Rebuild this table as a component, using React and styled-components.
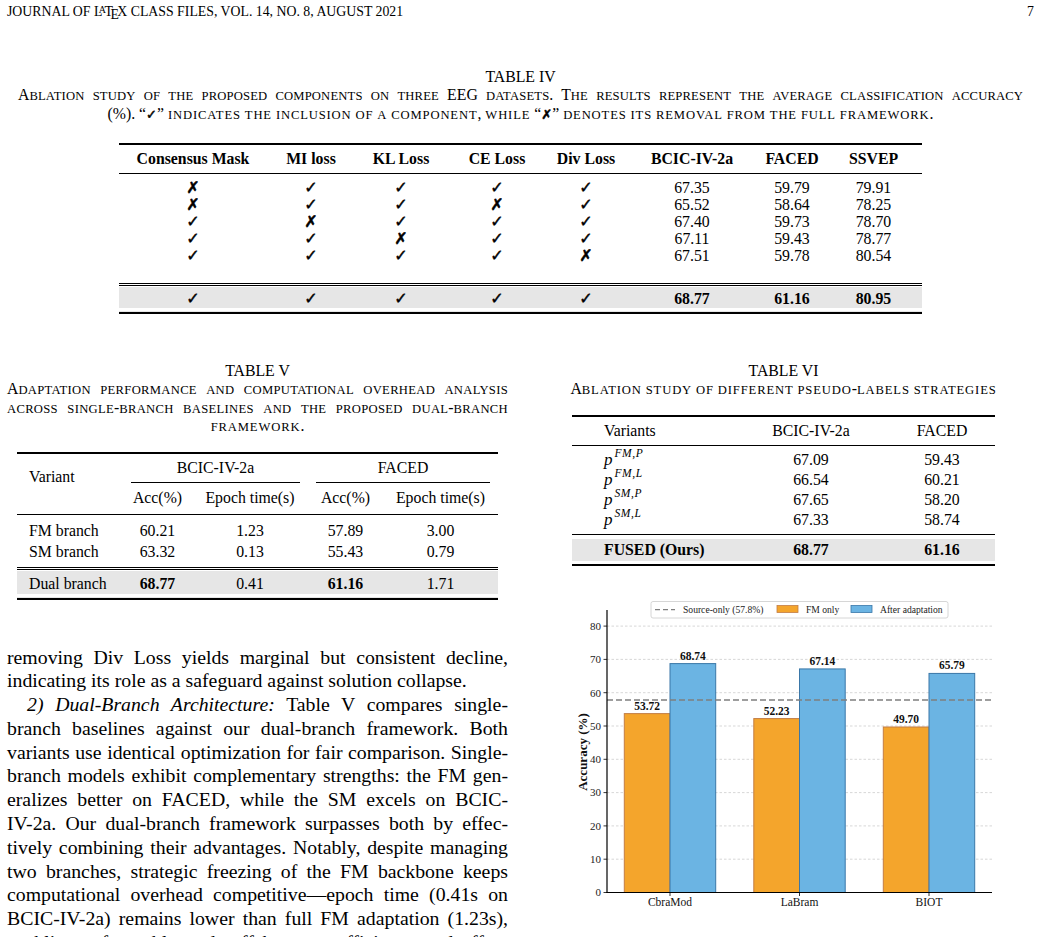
import React from "react";
import styled, { createGlobalStyle, css } from "styled-components";

const GlobalStyle = createGlobalStyle`
  html, body { margin: 0; padding: 0; background: #ffffff; }
  body {
    font-family: "Liberation Serif", "Times New Roman", serif;
    color: #000;
  }
`;

const Page = styled.main`
  box-sizing: border-box;
  width: 1041px;
  height: 937px;
  overflow: hidden;
  padding: 4px 7px 0;
`;

const RunningHead = styled.header`
  display: flex;
  justify-content: space-between;
  font-size: 13.8px;
  line-height: 16px;
`;

const LatexA = styled.span`
  font-size: 0.72em;
  vertical-align: 0.28em;
  margin-left: -0.36em;
  margin-right: -0.15em;
  line-height: 0;
`;

const LatexE = styled.span`
  vertical-align: -0.5ex;
  margin-left: -0.1667em;
  margin-right: -0.125em;
  line-height: 0;
`;

const LatexLogo = () => (
  <span>
    L<LatexA>A</LatexA>T<LatexE>E</LatexE>X
  </span>
);

/* ---------- captions ---------- */

const CaptionBlock = styled.div`
  width: ${(p) => p.$width}px;
  margin: 0 auto;
  font-size: 15.8px;
  line-height: 18.5px;
  text-align: center;
`;

const CaptionLine = styled.div`
  --sc-track: ${(p) => (p.$track != null ? p.$track : 0.85)}px;
  ${(p) =>
    p.$justify &&
    css`
      text-align: justify;
      text-align-last: justify;
    `}
  ${(p) =>
    p.$inset &&
    css`
      padding: 0 ${p.$inset}px;
    `}
`;

const Sc = styled.span`
  font-size: 0.8em;
  line-height: 1;
  letter-spacing: var(--sc-track);
  text-transform: uppercase;
`;

const SmallCaps = ({ text }) =>
  text.split(/([a-z]+)/).map((part, i) =>
    /^[a-z]+$/.test(part) ? <Sc key={i}>{part}</Sc> : <React.Fragment key={i}>{part}</React.Fragment>
  );

const Mark = styled.span`
  font-family: "DejaVu Sans", sans-serif;
  font-size: ${(p) => p.$size || 16}px;
  font-weight: 400;
  -webkit-text-stroke: 0.5px #000;
  display: inline-block;
  line-height: ${(p) => (p.$size ? 1 : "17px")};
  vertical-align: ${(p) => (p.$size ? "baseline" : "top")};
`;

/* ---------- tables ---------- */

const DataTable = styled.table`
  border-collapse: collapse;
  table-layout: fixed;
  width: ${(p) => p.$width}px;
  margin: ${(p) => p.$gap}px auto 0;
  font-family: "Liberation Serif", "Times New Roman", serif;
  font-size: 15.8px;
  line-height: ${(p) => p.$lh || 16}px;
`;

const Col = styled.col`
  width: ${(p) => p.$w}px;
`;

const Row = styled.tr`
  ${(p) => p.$top === "thick" && css`border-top: 2px solid #000;`}
  ${(p) => p.$top === "thin" && css`border-top: 1px solid #000;`}
  ${(p) => p.$top === "double" && css`border-top: 3px double #000;`}
  ${(p) => p.$bottom === "thick" && css`border-bottom: 2px solid #000;`}
  ${(p) => p.$bottom === "thin" && css`border-bottom: 1px solid #000;`}
  ${(p) =>
    p.$shade &&
    css`
      background: linear-gradient(
        to bottom,
        transparent ${p.$shade[0]}px,
        #e6e6e6 ${p.$shade[0]}px,
        #e6e6e6 calc(100% - ${p.$shade[1]}px),
        transparent calc(100% - ${p.$shade[1]}px)
      );
    `}
  & > td,
  & > th {
    padding-top: ${(p) => p.$pt || 0}px;
    padding-bottom: ${(p) => p.$pb || 0}px;
  }
`;

const Cell = styled.td`
  text-align: ${(p) => p.$align || "center"};
  padding-left: ${(p) => p.$indent || 0}px;
  padding-right: 0;
  font-weight: ${(p) => (p.$bold ? 700 : 400)};
  vertical-align: middle;
  white-space: nowrap;
`;

const SpanHead = styled.th`
  padding: 0 !important;
  font-weight: 400;
`;

const GroupRule = styled.div`
  margin: 0 8px;
  height: 28px;
  line-height: 28px;
  border-bottom: 1px solid #000;
`;

const RowSpanHead = styled.th`
  text-align: left;
  font-weight: 400;
  padding: 0 0 13px 12px !important;
  vertical-align: middle;
`;

const MathVar = styled.span`
  font-style: italic;
  font-size: 17px;
`;

const MathSup = styled.span`
  font-style: italic;
  font-size: 11.5px;
  vertical-align: 8px;
  line-height: 0;
  margin-left: 2px;
  letter-spacing: 0.6px;
`;

/* ---------- layout ---------- */

const WideFloat = styled.section`
  margin-top: 47.5px;
`;

const Columns = styled.div`
  display: grid;
  grid-template-columns: 501px 501px;
  column-gap: 25px;
  align-items: start;
  margin-top: 48px;
`;

const Column = styled.div`
  display: flex;
  flex-direction: column;
`;

const BodyText = styled.div`
  margin-top: 46px;
  font-size: 19.8px;
  line-height: 23.8px;
`;

const TextLine = styled.div`
  text-align: ${(p) => (p.$end ? "left" : "justify")};
  text-align-last: ${(p) => (p.$end ? "left" : "justify")};
  text-indent: ${(p) => (p.$indent ? "20px" : "0")};
`;

const ChartSvg = styled.svg`
  display: block;
  margin-top: 31px;
  font-family: "Liberation Serif", "Times New Roman", serif;
`;

const Italic = styled.span`
  font-style: italic;
`;

/* ---------- data ---------- */

const Y = "✓";
const N = "✗";

const ablationRows = [
  [N, Y, Y, Y, Y, "67.35", "59.79", "79.91"],
  [N, Y, Y, N, Y, "65.52", "58.64", "78.25"],
  [Y, N, Y, Y, Y, "67.40", "59.73", "78.70"],
  [Y, Y, N, Y, Y, "67.11", "59.43", "78.77"],
  [Y, Y, Y, Y, N, "67.51", "59.78", "80.54"],
];

const ablationCols = [148, 88, 92, 100, 78, 134, 66, 97];
const ablationHeads = ["Consensus Mask", "MI loss", "KL Loss", "CE Loss", "Div Loss", "BCIC-IV-2a", "FACED", "SSVEP"];

const pseudoRows = [
  ["FM,P", "67.09", "59.43"],
  ["FM,L", "66.54", "60.21"],
  ["SM,P", "67.65", "58.20"],
  ["SM,L", "67.33", "58.74"],
];

const models = [
  { name: "CbraMod", fm: 53.72, after: 68.74, cx: 137 },
  { name: "LaBram", fm: 52.23, after: 67.14, cx: 266.5 },
  { name: "BIOT", fm: 49.7, after: 65.79, cx: 396 },
];

const yOf = (v) => 295.5 - 3.33 * v;
const BAR_W = 45.7;

/* ---------- pieces ---------- */

function AblationTable() {
  return (
    <DataTable $width={803} $gap={19.5} $lh={17}>
      <colgroup>
        {ablationCols.map((w, i) => (
          <Col key={i} $w={w} />
        ))}
      </colgroup>
      <thead>
        <Row $top="thick" $bottom="thin" $pt={5.5} $pb={5.5}>
          {ablationHeads.map((h) => (
            <Cell as="th" key={h} $bold>
              {h}
            </Cell>
          ))}
        </Row>
      </thead>
      <tbody>
        {ablationRows.map((r, i) => (
          <Row key={i} $pt={i === 0 ? 5 : 0} $pb={i === ablationRows.length - 1 ? 19 : 0}>
            {r.map((c, j) => (
              <Cell key={j}>{j < 5 ? <Mark>{c}</Mark> : c}</Cell>
            ))}
          </Row>
        ))}
        <Row $top="double" $bottom="thick" $shade={[0, 2.5]} $pt={4} $pb={5}>
          {[Y, Y, Y, Y, Y].map((c, j) => (
            <Cell key={j}>
              <Mark>{c}</Mark>
            </Cell>
          ))}
          <Cell $bold>68.77</Cell>
          <Cell $bold>61.16</Cell>
          <Cell $bold>80.95</Cell>
        </Row>
      </tbody>
    </DataTable>
  );
}

function OverheadTable() {
  return (
    <DataTable $width={481} $gap={16}>
      <colgroup>
        <Col $w={106} />
        <Col $w={69} />
        <Col $w={116} />
        <Col $w={75} />
        <Col $w={115} />
      </colgroup>
      <thead>
        <Row $top="thick">
          <RowSpanHead rowSpan={2}>Variant</RowSpanHead>
          <SpanHead colSpan={2}>
            <GroupRule>BCIC-IV-2a</GroupRule>
          </SpanHead>
          <SpanHead colSpan={2}>
            <GroupRule>FACED</GroupRule>
          </SpanHead>
        </Row>
        <Row $bottom="thin" $pt={7.5} $pb={7.5}>
          <Cell as="th">Acc(%)</Cell>
          <Cell as="th">Epoch time(s)</Cell>
          <Cell as="th">Acc(%)</Cell>
          <Cell as="th">Epoch time(s)</Cell>
        </Row>
      </thead>
      <tbody>
        <Row $pt={8.5} $pb={2.5}>
          <Cell $align="left" $indent={12}>FM branch</Cell>
          <Cell>60.21</Cell>
          <Cell>1.23</Cell>
          <Cell>57.89</Cell>
          <Cell>3.00</Cell>
        </Row>
        <Row $pt={2.5} $pb={6.5}>
          <Cell $align="left" $indent={12}>SM branch</Cell>
          <Cell>63.32</Cell>
          <Cell>0.13</Cell>
          <Cell>55.43</Cell>
          <Cell>0.79</Cell>
        </Row>
        <Row $top="double" $bottom="thick" $shade={[0, 2.5]} $pt={6} $pb={6}>
          <Cell $align="left" $indent={12}>Dual branch</Cell>
          <Cell $bold>68.77</Cell>
          <Cell>0.41</Cell>
          <Cell $bold>61.16</Cell>
          <Cell>1.71</Cell>
        </Row>
      </tbody>
    </DataTable>
  );
}

function PseudoLabelTable() {
  return (
    <DataTable $width={423} $gap={16}>
      <colgroup>
        <Col $w={161} />
        <Col $w={156} />
        <Col $w={106} />
      </colgroup>
      <thead>
        <Row $top="thick" $bottom="thin" $pt={6} $pb={6}>
          <Cell as="th" $align="left" $indent={32}>Variants</Cell>
          <Cell as="th">BCIC-IV-2a</Cell>
          <Cell as="th">FACED</Cell>
        </Row>
      </thead>
      <tbody>
        {pseudoRows.map(([sup, a, b], i) => (
          <Row key={sup} $pt={i === 0 ? 6 : 2} $pb={i === pseudoRows.length - 1 ? 6 : 2}>
            <Cell $align="left" $indent={32}>
              <MathVar>p</MathVar>
              <MathSup>{sup}</MathSup>
            </Cell>
            <Cell>{a}</Cell>
            <Cell>{b}</Cell>
          </Row>
        ))}
        <Row $top="thin" $bottom="thick" $shade={[4, 2]} $pt={7.5} $pb={5.5}>
          <Cell $align="left" $indent={32} $bold>FUSED (Ours)</Cell>
          <Cell $bold>68.77</Cell>
          <Cell $bold>61.16</Cell>
        </Row>
      </tbody>
    </DataTable>
  );
}

function AccuracyChart() {
  const ticks = [0, 10, 20, 30, 40, 50, 60, 70, 80];
  return (
    <ChartSvg width="501" height="318" viewBox="0 0 501 318">
      {ticks
        .filter((t) => t > 0)
        .map((t) => (
          <line key={"g" + t} x1="74" x2="459" y1={yOf(t)} y2={yOf(t)} stroke="#cdcdcd" strokeWidth="0.8" strokeDasharray="2.5 2" />
        ))}
      {models.map((m) => (
        <g key={m.name}>
          <rect x={m.cx - BAR_W} y={yOf(m.fm)} width={BAR_W} height={295.5 - yOf(m.fm)} fill="#f4a52c" stroke="#c27d45" strokeWidth="1" />
          <rect x={m.cx} y={yOf(m.after)} width={BAR_W} height={295.5 - yOf(m.after)} fill="#6bb4e3" stroke="#3a77a8" strokeWidth="1" />
          <text x={m.cx - BAR_W / 2} y={yOf(m.fm) - 4} fontSize="11.5" fontWeight="700" textAnchor="middle" fill="#111">
            {m.fm.toFixed(2)}
          </text>
          <text x={m.cx + BAR_W / 2} y={yOf(m.after) - 4} fontSize="11.5" fontWeight="700" textAnchor="middle" fill="#111">
            {m.after.toFixed(2)}
          </text>
          <line x1={m.cx} x2={m.cx} y1="295.5" y2="299" stroke="#000" strokeWidth="0.8" />
          <text x={m.cx} y="309" fontSize="11.5" textAnchor="middle" fill="#111">
            {m.name}
          </text>
        </g>
      ))}
      <line x1="74" x2="459" y1={yOf(57.8)} y2={yOf(57.8)} stroke="#7f7f7f" strokeWidth="1.4" strokeDasharray="6 3" />
      {ticks.map((t) => (
        <g key={"t" + t}>
          <line x1="70.5" x2="74" y1={yOf(t)} y2={yOf(t)} stroke="#000" strokeWidth="0.8" />
          <text x="68" y={yOf(t) + 3.8} fontSize="11" textAnchor="end" fill="#222">
            {t}
          </text>
        </g>
      ))}
      <line x1="74" x2="74" y1="13" y2="296" stroke="#000" strokeWidth="1.2" />
      <line x1="73.4" x2="459" y1="295.5" y2="295.5" stroke="#000" strokeWidth="1.2" />
      <text transform="translate(53.5 155) rotate(-90)" fontSize="13" fontWeight="700" textAnchor="middle" fill="#111">
        Accuracy (%)
      </text>
      <g>
        <rect x="118" y="4.5" width="297" height="16.5" rx="2" fill="#fff" fillOpacity="0.9" stroke="#cccccc" strokeWidth="0.8" />
        <line x1="122" x2="142" y1="12.7" y2="12.7" stroke="#7f7f7f" strokeWidth="1.3" strokeDasharray="5 3" />
        <text x="150" y="16" fontSize="9.6" fill="#222">
          Source-only (57.8%)
        </text>
        <rect x="244" y="8.5" width="21" height="7" fill="#f4a52c" stroke="#c27d45" strokeWidth="0.8" />
        <text x="273" y="16" fontSize="9.6" fill="#222">
          FM only
        </text>
        <rect x="318" y="8.5" width="21" height="7" fill="#6bb4e3" stroke="#3a77a8" strokeWidth="0.8" />
        <text x="347" y="16" fontSize="9.6" fill="#222">
          After adaptation
        </text>
      </g>
    </ChartSvg>
  );
}

export default function App() {
  return (
    <>
      <GlobalStyle />
      <Page>
        <RunningHead>
          <span>
            JOURNAL OF <LatexLogo /> CLASS FILES, VOL. 14, NO. 8, AUGUST 2021
          </span>
          <span>7</span>
        </RunningHead>

        <WideFloat>
          <CaptionBlock $width={1027}>
            <CaptionLine>TABLE IV</CaptionLine>
            <CaptionLine $justify $inset={11} $track={0.15}>
              <SmallCaps text="Ablation study of the proposed components on three EEG datasets. The results represent the average classification accuracy" />
            </CaptionLine>
            <CaptionLine>
              <SmallCaps text="(%). “" />
              <Mark $size={13}>{Y}</Mark>
              <SmallCaps text="” indicates the inclusion of a component, while “" />
              <Mark $size={13}>{N}</Mark>
              <SmallCaps text="” denotes its removal from the full framework." />
            </CaptionLine>
          </CaptionBlock>
          <AblationTable />
        </WideFloat>

        <Columns>
          <Column>
            <CaptionBlock $width={501}>
              <CaptionLine>TABLE V</CaptionLine>
              <CaptionLine $justify $track={0.3}>
                <SmallCaps text="Adaptation performance and computational overhead analysis" />
              </CaptionLine>
              <CaptionLine $justify $track={0.3}>
                <SmallCaps text="across single-branch baselines and the proposed dual-branch" />
              </CaptionLine>
              <CaptionLine>
                <SmallCaps text="framework." />
              </CaptionLine>
            </CaptionBlock>
            <OverheadTable />
            <BodyText>
              <TextLine>removing Div Loss yields marginal but consistent decline,</TextLine>
              <TextLine $end>indicating its role as a safeguard against solution collapse.</TextLine>
              <TextLine $indent>
                <Italic>2) Dual-Branch Architecture:</Italic> Table V compares single-
              </TextLine>
              <TextLine>branch baselines against our dual-branch framework. Both</TextLine>
              <TextLine>variants use identical optimization for fair comparison. Single-</TextLine>
              <TextLine>branch models exhibit complementary strengths: the FM gen-</TextLine>
              <TextLine>eralizes better on FACED, while the SM excels on BCIC-</TextLine>
              <TextLine>IV-2a. Our dual-branch framework surpasses both by effec-</TextLine>
              <TextLine>tively combining their advantages. Notably, despite managing</TextLine>
              <TextLine>two branches, strategic freezing of the FM backbone keeps</TextLine>
              <TextLine>computational overhead competitive—epoch time (0.41s on</TextLine>
              <TextLine>BCIC-IV-2a) remains lower than full FM adaptation (1.23s),</TextLine>
              <TextLine>enabling a favorable trade-off between efficiency and effec-</TextLine>
            </BodyText>
          </Column>

          <Column>
            <CaptionBlock $width={501}>
              <CaptionLine>TABLE VI</CaptionLine>
              <CaptionLine>
                <SmallCaps text="Ablation study of different pseudo-labels strategies" />
              </CaptionLine>
            </CaptionBlock>
            <PseudoLabelTable />
            <AccuracyChart />
          </Column>
        </Columns>
      </Page>
    </>
  );
}
